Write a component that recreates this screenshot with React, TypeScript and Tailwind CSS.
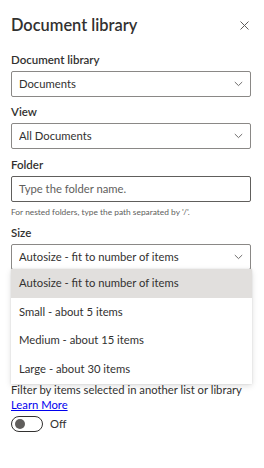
import React from 'react';

const font = { fontFamily: 'Lato, "Open Sans", sans-serif' };

function Chevron() {
  return (
    <svg width="9" height="6" viewBox="0 0 9 6" className="shrink-0">
      <path d="M0.8 1 L4.5 4.6 L8.2 1" fill="none" stroke="#605e5c" strokeWidth="0.9" />
    </svg>
  );
}

function Dropdown({ value }: { value: string }) {
  return (
    <div className="flex h-[26px] items-center justify-between rounded-[2px] border border-[#8a8886] pl-[7px] pr-[7px] text-[11.25px] text-[#323130]">
      <span className="truncate">{value}</span>
      <Chevron />
    </div>
  );
}

function Label({ children }: { children: React.ReactNode }) {
  return <div className="text-[11.5px] font-semibold leading-[20px] text-[#323130]">{children}</div>;
}

const sizeOptions = [
  'Autosize - fit to number of items',
  'Small - about 5 items',
  'Medium - about 15 items',
  'Large - about 30 items',
];

export default function App() {
  return (
    <div className="h-[468px] w-[264px] bg-white pl-[11px] pr-[13px] text-[#323130]" style={font}>
      {/* header */}
      <div className="flex items-center justify-between pt-[11px]">
        <h1 className="text-[16.4px] font-semibold leading-[28px]">Document library</h1>
        <svg width="9" height="9" viewBox="0 0 9 9" className="mr-[2px]">
          <path d="M0.5 0.5 L8.5 8.5 M8.5 0.5 L0.5 8.5" stroke="#605e5c" strokeWidth="1" />
        </svg>
      </div>

      <div className="mt-[11px]">
        <Label>Document library</Label>
        <div className="mt-[1px]">
          <Dropdown value="Documents" />
        </div>
      </div>

      <div className="mt-[5px]">
        <Label>View</Label>
        <div className="mt-[1px]">
          <Dropdown value="All Documents" />
        </div>
      </div>

      <div className="mt-[6px]">
        <Label>Folder</Label>
        <div className="mt-[1px] flex h-[26px] items-center rounded-[2px] border border-[#605e5c] pl-[7px] text-[11.25px] text-[#605e5c]">
          Type the folder name.
        </div>
        <div className="mt-[3px] text-[8.4px] leading-[14px] text-[#605e5c]">
          For nested folders, type the path separated by '/'.
        </div>
      </div>

      <div className="relative mt-[4px]">
        <Label>Size</Label>
        <div className="mt-[1px]">
          <Dropdown value="Autosize - fit to number of items" />
        </div>
        {/* open menu */}
        <div className="absolute left-0 right-[-1px] top-[46px] z-10 bg-white shadow-[0_2px_6px_rgba(0,0,0,0.13),0_0_2px_rgba(0,0,0,0.1)]">
          {sizeOptions.map((o, i) => (
            <div
              key={o}
              className={`flex h-[28.75px] items-center pl-[8px] text-[11.25px] text-[#323130] ${
                i === 0 ? 'bg-[#e1dfdd]' : ''
              }`}
            >
              {o}
            </div>
          ))}
        </div>
      </div>

      <div className="mt-[112px] text-[11.25px] leading-[15px]">
        Filter by items selected in another list or library
      </div>
      <a href="#" className="block text-[11.25px] leading-[15px] text-[#0000ee] underline">
        Learn More
      </a>
      <div className="mt-[4px] flex items-center gap-[7px]">
        <div className="flex h-[16px] w-[32px] items-center rounded-full border border-[#323130] pl-[3px]">
          <div className="h-[10px] w-[10px] rounded-full bg-[#605e5c]" />
        </div>
        <span className="text-[11.25px]">Off</span>
      </div>
    </div>
  );
}
